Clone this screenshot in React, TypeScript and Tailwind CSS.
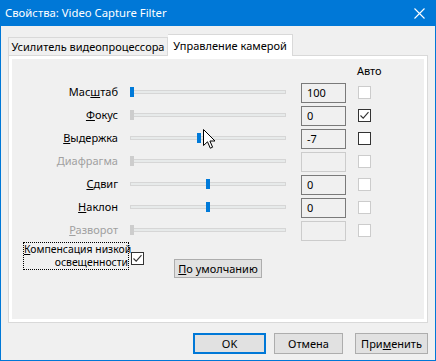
import React from 'react';

type Row = {
  label: React.ReactNode;
  disabled?: boolean;
  thumb: number;
  thumbBlue: boolean;
  value: string;
  boxOn: boolean;
  auto: 'off' | 'on' | 'checked';
};

const rows: Row[] = [
  { label: <>Мас<u>ш</u>таб</>, thumb: 0, thumbBlue: true, value: '100', boxOn: true, auto: 'off' },
  { label: <><u>Ф</u>окус</>, thumb: 0, thumbBlue: false, value: '0', boxOn: true, auto: 'checked' },
  { label: <><u>В</u>ыдержка</>, thumb: 67, thumbBlue: true, value: '-7', boxOn: true, auto: 'on' },
  { label: <><u>Д</u>иафрагма</>, disabled: true, thumb: 0, thumbBlue: false, value: '', boxOn: false, auto: 'off' },
  { label: <><u>С</u>двиг</>, thumb: 76, thumbBlue: true, value: '0', boxOn: true, auto: 'off' },
  { label: <><u>Н</u>аклон</>, thumb: 76, thumbBlue: true, value: '0', boxOn: true, auto: 'off' },
  { label: <><u>Р</u>азворот</>, disabled: true, thumb: 0, thumbBlue: false, value: '', boxOn: false, auto: 'off' },
];

const Check = () => (
  <svg width="11" height="11" viewBox="0 0 11 11" className="block">
    <path d="M1.5 5.5 L4.2 8.2 L9.5 2.2" fill="none" stroke="#333" strokeWidth="1.1" />
  </svg>
);

const CheckBox = ({ state }: { state: 'off' | 'on' | 'checked' }) => (
  <div
    className={
      'w-[13px] h-[13px] border flex items-center justify-center ' +
      (state === 'off' ? 'border-[#cccccc] bg-white' : 'border-[#333333] bg-white')
    }
  >
    {state === 'checked' ? <Check /> : null}
  </div>
);

const Cursor = () => (
  <svg width="13" height="20" viewBox="0 0 13 20" className="absolute left-[73px] top-[3px]">
    <path
      d="M0.5 0.5 L0.5 16.5 L4.5 12.8 L7.3 19.2 L9.6 18.2 L6.9 12 L12 12 Z"
      fill="#fff"
      stroke="#000"
      strokeWidth="1"
      strokeLinejoin="miter"
    />
  </svg>
);

const App = (): JSX.Element => {
  return (
    <div
      className="w-[436px] h-[361px] bg-[#0078d7] flex flex-col text-[11px] text-black select-none whitespace-nowrap"
      style={{ fontFamily: '"Segoe UI", "Noto Sans", "Open Sans", sans-serif' }}
    >
      {/* title bar */}
      <div className="h-[26px] flex items-center pl-[5px] pr-[11px] text-white text-[11.3px]">
        <span className="leading-none">Свойства: Video Capture Filter</span>
        <svg width="11" height="11" viewBox="0 0 11 11" className="ml-auto">
          <path d="M0.5 0.5 L10.5 10.5 M10.5 0.5 L0.5 10.5" stroke="#fff" strokeWidth="1.1" />
        </svg>
      </div>

      <div className="flex-1 bg-[#f0f0f0] ml-[1px] mr-[1px] mb-[1px] flex flex-col px-[7px]">
        {/* tabs */}
        <div className="flex items-end h-[29px]">
          <div className="h-[18px] flex items-center justify-center border border-b-0 border-[#d9d9d9] bg-[#f0f0f0] w-[160px] leading-none">
            Усилитель видеопроцессора
          </div>
          <div className="h-[22px] -mb-[1px] relative z-10 flex items-center justify-center border border-b-0 border-[#d9d9d9] border-l-0 bg-white w-[125px] leading-none">
            Управление камерой
          </div>
        </div>

        {/* panel */}
        <div className="h-[268px] border border-[#d9d9d9] bg-white p-[3px] flex">
          <div className="flex-1 bg-[#f0f0f0] flex flex-col">
            <div className="h-[22px] flex items-center">
              <span className="ml-[345px] leading-none">Авто</span>
            </div>

            {rows.map((r, i) => (
              <div key={i} className="h-[23px] flex items-center">
                <div className={'w-[106px] text-right leading-none -mt-[2px] ' + (r.disabled ? 'text-[#a0a0a0]' : '')}>
                  {r.label}
                </div>
                <div className="ml-[12px] w-[156px] h-[23px] relative flex items-center -mt-[2px]">
                  <div className="w-full h-[4px] border border-[#d6d6d6] bg-[#e7eaea]" />
                  <div
                    className={
                      'absolute top-[7px] w-[4px] h-[10px] ' + (r.thumbBlue ? 'bg-[#007ad9]' : 'bg-[#cdcdcd]')
                    }
                    style={{ left: r.thumb }}
                  />
                  {i === 2 ? <Cursor /> : null}
                </div>
                <div
                  className={
                    'ml-[15px] w-[45px] h-[20px] border flex items-center pl-[5px] leading-none ' +
                    (r.boxOn ? 'border-[#7a7a7a]' : 'border-[#cccccc]')
                  }
                >
                  {r.value}
                </div>
                <div className="ml-[12px]">
                  <CheckBox state={r.auto} />
                </div>
              </div>
            ))}

            <div className="flex items-start">
              <div className="ml-[11px] w-[106px] h-[28px] border border-dotted border-black text-right text-[10.4px] leading-[13px] pt-[0px]">
                <div><u>К</u>омпенсация низкой</div>
                <div>освещенности</div>
              </div>
              <div className="ml-[2px] mt-[10px]">
                <CheckBox state="checked" />
              </div>
              <div className="ml-[30px] mt-[17px] w-[88px] h-[19px] border border-[#adadad] bg-[#e1e1e1] flex items-center justify-center leading-none">
                <span>
                  <u>П</u>о умолчанию
                </span>
              </div>
            </div>
          </div>
        </div>

        {/* bottom buttons */}
        <div className="flex mt-[10px] h-[21px]">
          <div className="ml-[185px] w-[73px] h-[21px] border-2 border-[#0078d7] bg-[#e1e1e1] flex items-center justify-center leading-none">
            OK
          </div>
          <div className="ml-[8px] w-[69px] h-[21px] border border-[#adadad] bg-[#e1e1e1] flex items-center justify-center leading-none">
            Отмена
          </div>
          <div className="ml-[12px] w-[73px] h-[21px] border border-[#adadad] bg-[#e1e1e1] flex items-center justify-center leading-none">
            <span>
              При<u>м</u>енить
            </span>
          </div>
        </div>
      </div>
    </div>
  );
};

export default App;
